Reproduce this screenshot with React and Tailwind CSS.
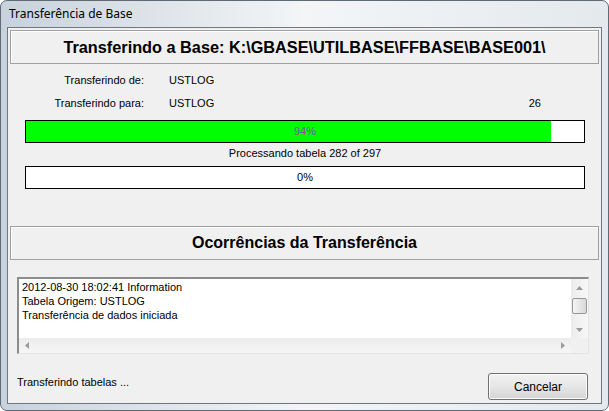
import React from 'react'

const Bar = ({ pct, label, labelColor }) => (
  <div className="relative h-[23px] border border-black bg-white">
    <div className="h-full bg-[#00ff00]" style={{ width: `${pct}%` }} />
    <div className={`absolute inset-0 flex items-center justify-center text-[11px] ${labelColor}`}>{label}</div>
  </div>
)

const Tri = ({ dir }) => {
  const pts = {
    up: '0,4 3.5,0 7,4',
    down: '0,0 3.5,4 7,0',
    left: '4,0 0,3.5 4,7',
    right: '0,0 4,3.5 0,7',
  }[dir]
  const vert = dir === 'up' || dir === 'down'
  return (
    <svg width={vert ? 7 : 4} height={vert ? 4 : 7} viewBox={vert ? '0 0 7 4' : '0 0 4 7'}>
      <polygon points={pts} fill="#9a9a9a" />
    </svg>
  )
}

export default function App() {
  return (
    <div className="w-[609px] h-[411px] bg-white text-black" style={{ fontFamily: '"Liberation Sans", Arial, sans-serif' }}>
      <div className="h-full flex flex-col rounded-[7px] border border-[#5f6a75] bg-gradient-to-r from-[#c8d2dc] via-[#f3f5f7] to-[#e4e9ee] px-[6px] pb-[6px]">
        {/* title bar */}
        <div className="h-[26px] flex items-center pl-[2px] text-[12px] text-black" style={{ fontFamily: '"Noto Sans", sans-serif' }}>
          Transferência de Base
        </div>

        {/* client area */}
        <div className="flex-1 flex flex-col border border-[#6f7882] bg-[#f0f0f0]">
          <div className="mx-[2px] mt-[2px] h-[34px] flex items-center justify-center border border-[#a0a0a0] shadow-[inset_1px_1px_0_#ffffff] text-[16.3px] font-bold">
            Transferindo a Base: K:\GBASE\UTILBASE\FFBASE\BASE001\
          </div>

          <div className="h-[162px] flex flex-col text-[11px]">
            <div className="flex items-center h-[14px] mt-[9px]">
              <div className="w-[136px] text-right">Transferindo de:</div>
              <div className="ml-[25px]">USTLOG</div>
            </div>
            <div className="flex items-center h-[14px] mt-[9px]">
              <div className="w-[136px] text-right">Transferindo para:</div>
              <div className="ml-[25px]">USTLOG</div>
              <div className="ml-auto mr-[60px]">26</div>
            </div>
            <div className="ml-[17px] w-[560px] mt-[10px]">
              <Bar pct={94} label="94%" labelColor="text-[#8a4f9a]" />
              <div className="h-[20px] flex items-center justify-center">Processando tabela 282 of 297</div>
              <div className="mt-[3px]">
                <Bar pct={0} label="0%" labelColor="text-black" />
              </div>
            </div>
          </div>

          <div className="mx-[2px] h-[34px] flex items-center justify-center border border-[#a0a0a0] shadow-[inset_1px_1px_0_#ffffff] text-[16px] font-bold">
            Ocorrências da Transferência
          </div>

          {/* log box */}
          <div className="ml-[9px] mt-[17px] w-[572px] h-[77px] flex flex-col border-t-2 border-l-2 border-t-[#8c8c8c] border-l-[#8c8c8c] border-r border-b border-r-[#e3e3e3] border-b-[#e3e3e3] bg-white text-[11px]">
            <div className="flex-1 flex">
              <div className="flex-1 pl-[3px] pt-[1px] leading-[14px]">
                <div>2012-08-30 18:02:41 Information</div>
                <div>Tabela Origem: USTLOG</div>
                <div>Transferência de dados iniciada</div>
              </div>
              <div className="w-[17px] flex flex-col items-center bg-gradient-to-r from-[#ececec] to-[#f7f7f7]">
                <div className="h-[17px] flex items-center justify-center"><Tri dir="up" /></div>
                <div className="mt-[2px] w-[15px] h-[16px] rounded-[2px] border border-[#979797] bg-gradient-to-r from-[#f4f4f4] to-[#d8d8d8]" />
                <div className="flex-1" />
                <div className="h-[17px] flex items-center justify-center"><Tri dir="down" /></div>
              </div>
            </div>
            <div className="h-[15px] flex">
              <div className="flex-1 flex items-center justify-between px-[6px] bg-gradient-to-b from-[#ececec] to-[#f6f6f6]">
                <Tri dir="left" />
                <Tri dir="right" />
              </div>
              <div className="w-[17px] bg-[#f0f0f0]" />
            </div>
          </div>

          <div className="flex items-start pl-[9px] pr-[13px] pt-[19px] text-[11px]">
            <div className="mt-[1px]">Transferindo tabelas ...</div>
            <div className="ml-auto w-[100px] h-[27px] flex items-center justify-center rounded-[3px] border border-[#707070] bg-gradient-to-b from-[#f2f2f2] via-[#e6e6e6] to-[#d4d4d4] shadow-[inset_0_0_0_1px_#fcfcfc] text-[12px]">
              Cancelar
            </div>
          </div>
        </div>
      </div>
    </div>
  )
}
